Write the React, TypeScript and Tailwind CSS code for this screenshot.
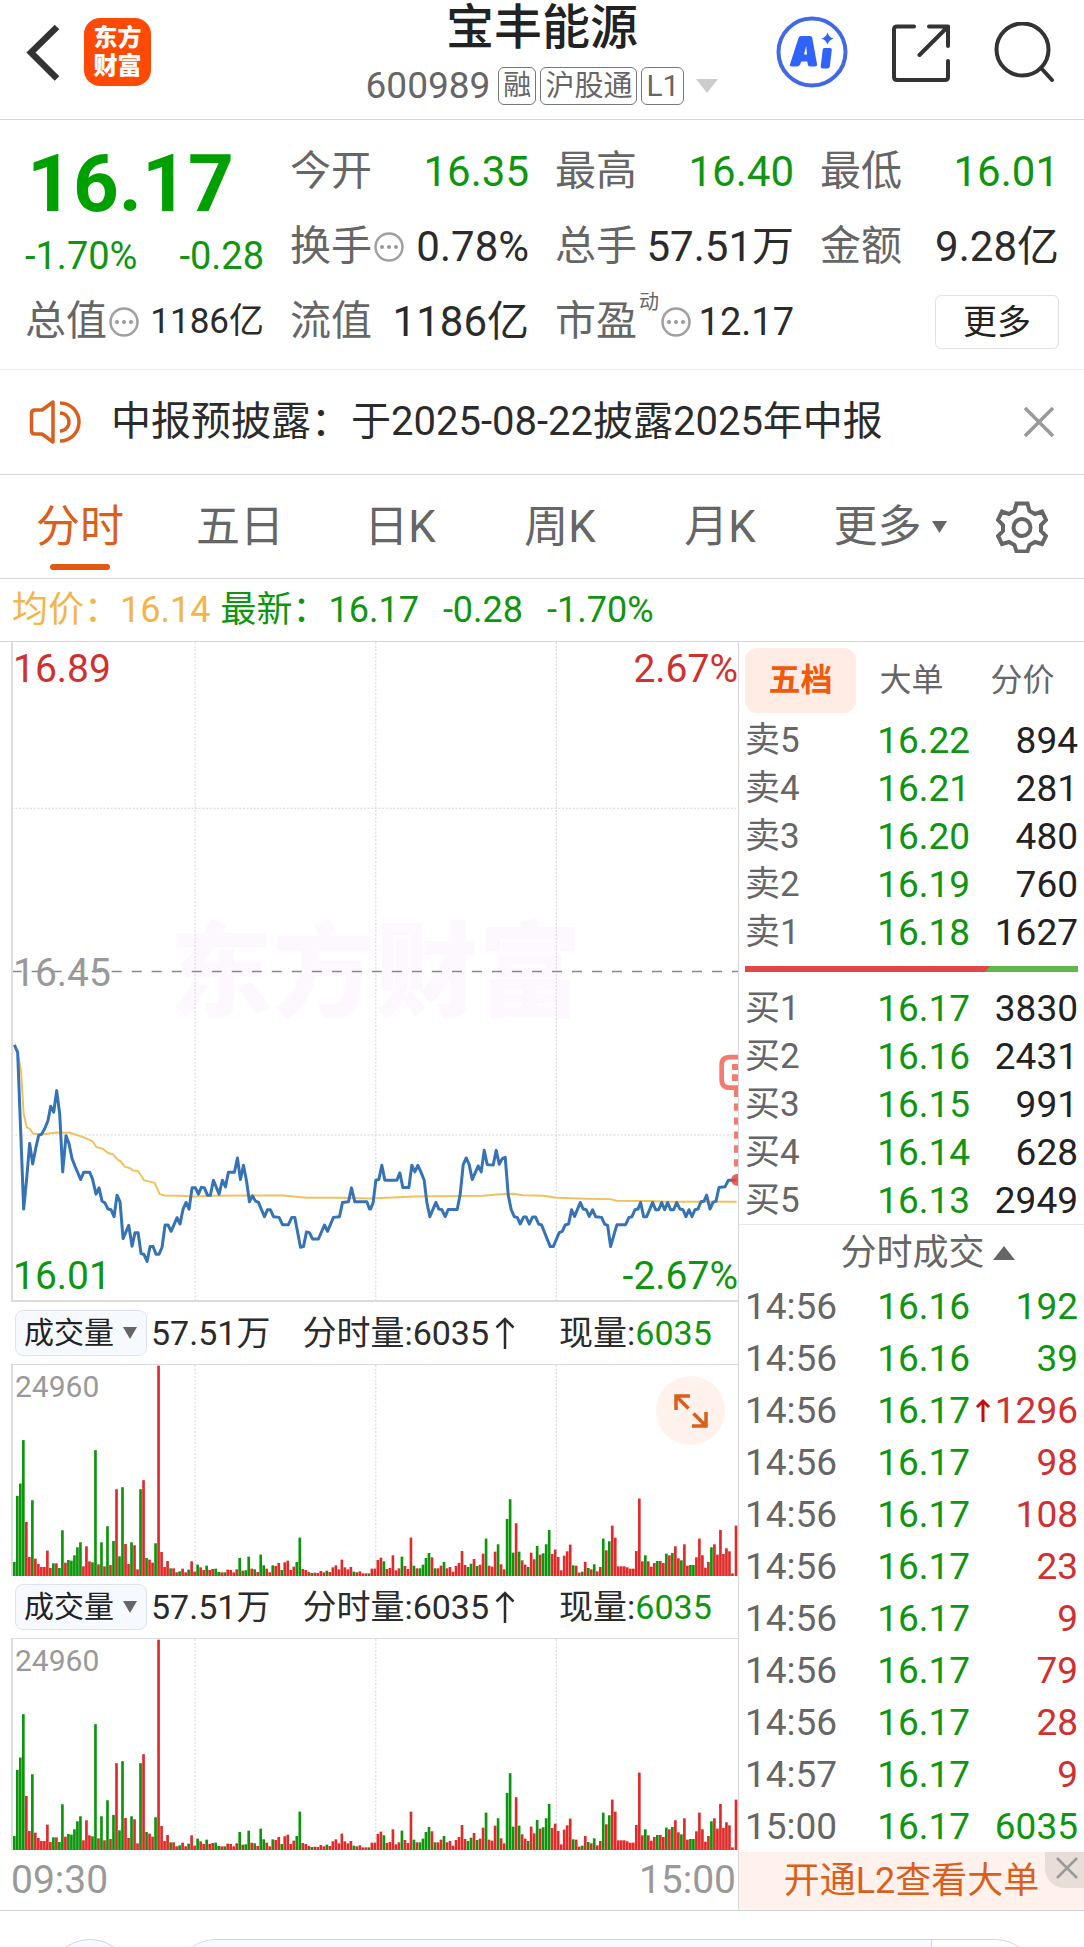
import React from 'react';

const PRICE_POINTS =
  '44,137 54,160 62,370 72,632 81,540 90,434 99,496 108,450 117,410 126,406 135,390 145,365 153,322 162,340 171,275 180,345 189,520 199,411 208,435 217,480 226,503 243,543 252,521 270,521 278,540 289,587 298,568 307,608 316,614 325,632 334,634 343,655 352,590 361,610 370,721 387,681 397,744 406,703 415,703 424,766 433,769 442,790 451,745 460,745 469,768 478,768 487,747 496,680 505,680 514,699 532,658 541,677 550,632 559,612 568,632 577,568 587,568 596,587 605,566 614,568 623,590 632,590 641,545 658,587 668,545 677,565 686,521 704,521 713,478 722,543 731,500 740,546 749,610 758,592 767,608 776,612 794,655 803,634 812,634 821,655 838,657 848,679 866,679 876,657 885,657 902,747 911,745 920,701 929,703 938,722 956,722 974,680 983,699 1001,657 1019,655 1028,612 1046,610 1055,568 1065,610 1101,610 1109,632 1112,632 1120,612 1128,545 1137,543 1146,500 1155,545 1191,545 1200,523 1209,567 1227,567 1236,500 1245,520 1254,500 1263,520 1273,545 1281,612 1290,655 1308,612 1317,632 1326,634 1336,655 1345,633 1372,633 1381,587 1390,498 1399,478 1408,498 1417,543 1435,502 1444,520 1453,455 1462,498 1480,499 1489,455 1498,497 1507,480 1516,476 1525,590 1534,634 1543,655 1552,657 1561,677 1571,656 1579,656 1588,677 1598,656 1607,656 1616,677 1625,680 1651,745 1660,745 1678,703 1687,699 1696,680 1706,677 1715,634 1724,654 1741,612 1750,632 1759,634 1768,654 1778,634 1787,655 1805,657 1814,677 1823,681 1832,745 1842,710 1851,679 1877,679 1887,657 1896,655 1905,634 1914,632 1922,612 1931,655 1940,655 1958,612 1967,634 1976,634 1985,612 1994,634 2003,612 2012,634 2021,634 2030,612 2040,632 2049,634 2058,655 2067,634 2076,655 2085,634 2094,632 2103,610 2112,608 2120,590 2130,632 2139,612 2148,608 2157,567 2175,565 2185,545 2210,545';

const AVERAGE_POINTS =
  '54,160 64,215 72,345 81,385 90,390 100,404 126,407 170,401 210,402 250,415 278,427 290,445 310,451 325,463 340,467 355,484 362,487 375,504 390,508 400,516 415,517 433,545 465,553 480,587 495,591 540,592 580,594 640,592 740,591 850,591 920,598 1020,598 1110,600 1180,597 1240,594 1450,592 1500,587 1540,586 1570,590 1630,592 1670,598 1760,601 1830,602 1850,607 1940,608 2010,610 2210,610';

const VOLUMES =
  'g42 g240 g277 g407 r162 r57 g227 r52 r36 r27 r27 r76 r24 g38 r38 g24 g137 r40 g48 g46 g62 g86 g101 r29 r89 r44 g41 g377 r35 g101 r29 g149 r33 g105 r260 g59 g266 r96 r36 g101 r92 r20 g260 r287 g54 r49 r40 g98 r630 r72 r27 r45 g23 r23 r11 g14 r22 r11 g19 r44 r13 g34 r26 r18 g31 r18 r21 g22 g12 r11 g11 r19 r18 r11 r20 g54 r16 g17 g58 r22 g20 r12 g64 g32 r22 r11 g32 r30 r39 g18 r41 r46 r18 r28 g42 g115 r21 r18 r12 g9 r10 r9 r15 r11 g16 r12 r26 r32 r20 r49 r26 r20 r27 g13 r11 r14 r8 r8 g8 r22 r22 r48 r55 g44 r21 r24 r62 r17 r23 g58 r30 r21 r115 g31 r23 g23 g34 g54 g69 r56 g23 r23 r31 g42 r23 r27 r13 r30 r39 r75 r33 g27 g37 r51 g30 r34 r67 g112 r31 r28 r73 g95 r35 r20 g171 g230 g70 r158 g73 r47 r34 g27 r70 r50 g90 r64 g68 g95 g138 r66 r79 r57 r17 r61 r74 r94 g32 r31 r10 g13 r42 g24 r20 g35 r14 r27 g112 r77 g104 r151 r115 r29 r29 r29 r26 r22 r22 r75 r232 r44 g62 r44 r28 r39 g45 r45 r39 g67 r62 g69 r89 r53 g47 r95 r31 g33 g33 r56 r112 r62 r25 r42 g86 r95 r64 r138 r66 r83 r74 r8 r151'
    .split(' ')
    .map((v) => ({ up: v[0] === 'r', value: Number(v.slice(1)) }));

const SELLS = [
  ['卖5', '16.22', '894'],
  ['卖4', '16.21', '281'],
  ['卖3', '16.20', '480'],
  ['卖2', '16.19', '760'],
  ['卖1', '16.18', '1627'],
];
const BUYS = [
  ['买1', '16.17', '3830'],
  ['买2', '16.16', '2431'],
  ['买3', '16.15', '991'],
  ['买4', '16.14', '628'],
  ['买5', '16.13', '2949'],
];
const TRADES = [
  { time: '14:56', price: '16.16', volume: '192', up: false },
  { time: '14:56', price: '16.16', volume: '39', up: false },
  { time: '14:56', price: '16.17', volume: '1296', up: true, arrow: true },
  { time: '14:56', price: '16.17', volume: '98', up: true },
  { time: '14:56', price: '16.17', volume: '108', up: true },
  { time: '14:56', price: '16.17', volume: '23', up: true },
  { time: '14:56', price: '16.17', volume: '9', up: true },
  { time: '14:56', price: '16.17', volume: '79', up: true },
  { time: '14:56', price: '16.17', volume: '28', up: true },
  { time: '14:57', price: '16.17', volume: '9', up: true },
  { time: '15:00', price: '16.17', volume: '6035', up: false },
];

function MoreDots() {
  return (
    <svg viewBox="0 0 30 30" className="size-[30px] shrink-0" aria-hidden="true">
      <circle cx="15" cy="15" r="13.5" fill="none" stroke="#a0a0a0" strokeWidth="2.5" />
      <circle cx="8" cy="15" r="2" fill="#999" />
      <circle cx="15" cy="15" r="2" fill="#999" />
      <circle cx="22" cy="15" r="2" fill="#999" />
    </svg>
  );
}

function Header() {
  return (
    <header className="grid h-[120px] shrink-0 grid-cols-[1fr_auto_1fr] border-b border-[#d6d6d6]">
      <div className="flex items-start gap-5 pl-6 pt-4">
        <button aria-label="返回" className="mt-2">
          <svg viewBox="0 0 40 58" className="h-[58px] w-10" fill="none" stroke="#333" strokeWidth="6.5">
            <path d="M33 3 7 28.500l26 26" strokeLinejoin="miter" />
          </svg>
        </button>
        <div className="mt-0.5 flex h-[68px] w-[67px] flex-col items-center justify-center rounded-2xl bg-[#ff4a05] text-2xl leading-7 font-black text-white">
          <span>东方</span>
          <span>财富</span>
        </div>
      </div>
      <div className="flex flex-col items-center">
        <h1 className="pt-0.5 text-5xl leading-[52px] font-medium text-[#222]">宝丰能源</h1>
        <button className="mt-3 flex items-center gap-1 text-[#666]">
          <span className="text-[37px] leading-10">600989</span>
          <span className="ml-1 rounded-md border border-[#777] px-1 text-[28px] leading-9">融</span>
          <span className="rounded-md border border-[#777] px-1 text-[29px] leading-9">沪股通</span>
          <span className="rounded-md border border-[#777] px-1 text-[30px] leading-9">L1</span>
          <svg viewBox="0 0 22 14" className="ml-2 h-3.5 w-[22px]" aria-hidden="true">
            <path d="M0 0h22L11 14z" fill="#ccc" />
          </svg>
        </button>
      </div>
      <div className="flex items-start justify-end gap-11 pt-4 pr-[30px]">
        <button aria-label="AI">
          <svg viewBox="0 0 72 72" className="size-[72px]">
            <circle cx="36" cy="36" r="33.500" fill="none" stroke="#4169e6" strokeWidth="4" />
            <g fill="#2f63fa">
              <path
                fillRule="evenodd"
                d="M25 20h9q2 0 2.300 2L41 48q.3 2.500-2 2.500h-5q-2 0-2.200-2l-.5-3h-6l-1.200 3q-.8 2-3 2h-5.500q-2.500 0-1.500-2.500L22.500 22q.7-2 2.500-2ZM28 38.500h3L30.200 30Z"
              />
              <path d="M48 32h6q2 0 1.800 2l-2 16.500q-.3 2-2.300 2h-5q-2 0-1.800-2l2-16.500q.3-2 1.300-2Z" />
              <path d="M51.500 16.500q1.500 5 6 6-4.500 1.500-6 6-1.500-4.500-6-6 4.500-1 6-6Z" />
            </g>
          </svg>
        </button>
        <button aria-label="分享" className="mt-2">
          <svg viewBox="0 0 58 58" className="size-[58px]" fill="none" stroke="#333" strokeWidth="4" strokeLinecap="round" strokeLinejoin="round">
            <path d="M22 2.500H5q-3 0-3 3V53q0 3 3 3h48q3 0 3-3V37M37 2.500h19V22M56 2.500 27.500 31" />
          </svg>
        </button>
        <button aria-label="搜索" className="mt-1.5">
          <svg viewBox="0 0 60 60" className="size-[60px]" fill="none" stroke="#333" strokeWidth="4" strokeLinecap="round">
            <circle cx="28.500" cy="27.500" r="26" />
            <path d="m47 46 11 12" />
          </svg>
        </button>
      </div>
    </header>
  );
}

function Stat({
  label,
  value,
  tone = 'text-[#2b2b2b]',
  size = 'text-[42px]',
  dots = false,
  sup,
}: {
  label: string;
  value: string;
  tone?: string;
  size?: string;
  dots?: boolean;
  sup?: string;
}) {
  return (
    <div className="flex h-[75px] items-center justify-between whitespace-nowrap">
      <dt className="flex items-center gap-0.5 text-[41px] leading-none text-[#666]">
        <span>{label}</span>
        {sup && <sup className="-top-5 self-center text-xl leading-none">{sup}</sup>}
        {dots && <MoreDots />}
      </dt>
      <dd className={`leading-none ${size} ${tone}`}>{value}</dd>
    </div>
  );
}

function Quote() {
  return (
    <section className="shrink-0 border-b border-[#ececec] px-[25px] pt-3.5 pb-2.5">
      <div className="grid grid-cols-4 gap-x-[26px]">
        <div className="row-span-2 pt-3">
          <p className="pl-0.5 text-[80px] leading-[76px] font-bold text-[#00a000]">16.17</p>
          <p className="mt-4 flex justify-between text-[38px] leading-9 whitespace-nowrap text-[#109510]">
            <span>-1.70%</span>
            <span>-0.28</span>
          </p>
        </div>
        <dl className="contents">
          <Stat label="今开" value="16.35" tone="text-[#109510]" />
          <Stat label="最高" value="16.40" tone="text-[#109510]" />
          <Stat label="最低" value="16.01" tone="text-[#109510]" />
          <Stat label="换手" value="0.78%" dots />
          <Stat label="总手" value="57.51万" />
          <Stat label="金额" value="9.28亿" />
          <Stat label="总值" value="1186亿" dots size="text-[35px]" />
          <Stat label="流值" value="1186亿" />
          <Stat label="市盈" value="12.17" sup="动" dots size="text-[38px]" />
        </dl>
        <div className="flex h-[75px] items-center justify-end">
          <button className="h-[54px] w-[124px] rounded-md border border-[#e2e2e2] text-[34px] leading-none text-[#222]">更多</button>
        </div>
      </div>
    </section>
  );
}

function Notice() {
  return (
    <section className="flex h-[105px] shrink-0 items-center border-b border-[#d6d6d6] pr-[30px] pl-[29px]">
      <svg viewBox="0 0 52 46" className="h-[46px] w-[52px] shrink-0" fill="none" stroke="#d9601c" strokeWidth="3.500" aria-hidden="true">
        <path d="M24 3v40L13 35H6q-3.500 0-3.500-3.500v-17Q2.500 11 6 11h7Z" strokeLinejoin="round" />
        <path d="M31 14a9 9 0 0 1 0 18M31 4a19 19 0 0 1 0 38" />
      </svg>
      <p className="ml-[30px] flex-1 text-[40px] leading-none whitespace-nowrap text-[#2b2b2b]">中报预披露：于2025-08-22披露2025年中报</p>
      <button aria-label="关闭">
        <svg viewBox="0 0 30 30" className="size-[30px]" stroke="#999" strokeWidth="3.500">
          <path d="m1 1 28 28M29 1 1 29" />
        </svg>
      </button>
    </section>
  );
}

function Periods() {
  return (
    <nav className="grid h-[104px] shrink-0 grid-cols-[repeat(5,16fr)_18fr_10fr] border-b border-[#d6d6d6] pr-1 text-[44px] leading-none text-[#666]">
      <button className="relative text-[#d9601c]">
        分时
        <span className="absolute bottom-2 left-1/2 h-1.5 w-[60px] -translate-x-1/2 rounded-full bg-[#e0590e]" />
      </button>
      <button>五日</button>
      <button>日K</button>
      <button>周K</button>
      <button>月K</button>
      <button className="flex items-center justify-center gap-2.5">
        更多
        <svg viewBox="0 0 15 12" className="h-3 w-[15px]" aria-hidden="true">
          <path d="M0 0h15L7.500 12z" fill="#666" />
        </svg>
      </button>
      <button aria-label="设置" className="flex items-center pl-4">
        <svg viewBox="0 0 52 52" className="size-[52px]" fill="none" stroke="#666" strokeWidth="4" strokeLinejoin="miter">
          <path d="M20.500 2.500h11l2 7.500 5.500 3 7-2.500 4 8.500-5 5v6l5 5-4 8-7-2-5.500 3-2 6.500h-11l-2-6.500-5.500-3-7 2-4-8 5-5v-6l-5-5 4-8.500 7 2.500 5.500-3Z" />
          <circle cx="26" cy="26.500" r="8.500" />
        </svg>
      </button>
    </nav>
  );
}

function Summary() {
  return (
    <p className="flex h-[63px] shrink-0 items-center border-b border-[#d6d6d6] pl-3 text-[36px] leading-none whitespace-nowrap text-[#109510]">
      <span className="text-[#f2b54a]">均价：16.14</span>
      <span className="ml-2.5">最新：16.17</span>
      <span className="ml-6">-0.28</span>
      <span className="ml-6">-1.70%</span>
    </p>
  );
}

function GridLines({ top, height }: { top: number; height: number }) {
  return (
    <g stroke="#d4d4d4" strokeWidth="3" strokeDasharray="6 5">
      {[586, 1128, 1669].map((x) => (
        <path key={x} d={`M${x} ${top}v${height}`} />
      ))}
    </g>
  );
}

function PriceChart() {
  return (
    <div className="relative h-[660px] overflow-hidden border-b-2 border-l-2 border-[#dcdcdc] text-[39px] leading-none">
      <div className="absolute inset-x-0 top-[272px] text-center text-[103px] leading-[120px] font-black text-[#fdf8fe]">东方财富</div>
      <svg viewBox="40 -1077 2174 1983" preserveAspectRatio="none" className="absolute inset-0 size-full" role="img" aria-label="分时走势">
        <GridLines top={-1077} height={1983} />
        <path d="M36-576h2178M36 409h2178" stroke="#d4d4d4" strokeWidth="3" strokeDasharray="6 5" />
        <path d="M36-84h2178" stroke="#888" strokeWidth="4" strokeDasharray="30 30" />
        <polyline points={AVERAGE_POINTS} fill="none" stroke="#f0c25e" strokeWidth="6" strokeLinejoin="round" />
        <polyline points={PRICE_POINTS} fill="none" stroke="#3673b5" strokeWidth="9" strokeLinejoin="round" />
        <g fill="none" stroke="#f47c6e">
          <path d="M2214 174h-24q-25 0-25 24v44q0 24 25 24h24" strokeWidth="14" />
          <path d="M2208 272v250" strokeWidth="12" strokeDasharray="22 20" />
        </g>
        <path d="M2196 195h18v18h-18zM2196 226h18v20h-18z" fill="#f47c6e" />
        <circle cx="2211" cy="544" r="18" fill="#e8463c" fillOpacity=".85" />
      </svg>
      <span className="absolute top-2 left-0 text-[#d03030]">16.89</span>
      <span className="absolute top-2 right-0 text-[#d03030]">2.67%</span>
      <span className="absolute top-[312px] left-0 text-[#999]">16.45</span>
      <span className="absolute bottom-1 left-0 text-[#109510]">16.01</span>
      <span className="absolute right-0 bottom-1 text-[#109510]">-2.67%</span>
    </div>
  );
}

function VolumePanel({ id, expandable = false }: { id: string; expandable?: boolean }) {
  return (
    <section>
      <div className="flex h-[62px] items-center pl-1 text-[34px] leading-none whitespace-nowrap text-[#2b2b2b]">
        <div className="relative h-[46px] w-[132px] shrink-0">
          <select
            id={id}
            aria-label="指标"
            className="size-full appearance-none rounded-lg border border-[#dfe3ee] bg-[#f6f9ff] pl-2 text-[30px] leading-10 text-[#222]"
          >
            <option>成交量</option>
          </select>
          <svg viewBox="0 0 14 12" className="pointer-events-none absolute top-[17px] right-2.5 h-3 w-3.5" aria-hidden="true">
            <path d="M0 0h14L7 12z" fill="#666" />
          </svg>
        </div>
        <span className="ml-1">57.51万</span>
        <span className="ml-8">分时量:6035</span>
        <svg viewBox="0 0 20 32" className="ml-1.5 h-8 w-5" fill="none" stroke="#2b2b2b" strokeWidth="2.500" aria-hidden="true">
          <path d="M10 32V2M1.500 10.500 10 2l8.500 8.500" />
        </svg>
        <span className="ml-11">
          现量:<span className="text-[#109510]">6035</span>
        </span>
      </div>
      <div className="relative h-[212px] border-t border-l-2 border-[#dcdcdc]">
        <svg viewBox="40 193 2174 632" preserveAspectRatio="none" className="absolute inset-0 size-full" role="img" aria-label="成交量柱状图">
          <GridLines top={193} height={632} />
          {VOLUMES.map((v, i) => (
            <rect
              key={i}
              x={i === 240 ? 2204 : 40 + i * 9.01}
              y={825 - v.value}
              width="8"
              height={v.value}
              fill={v.up ? '#e02b2b' : '#0c960c'}
            />
          ))}
        </svg>
        <span className="absolute top-[7px] left-0.5 text-[30px] leading-none text-[#999]">24960</span>
        {expandable && (
          <button aria-label="全屏" className="absolute top-[11px] right-[13px] flex size-[69px] items-center justify-center rounded-full bg-[#fff1ec]">
            <svg viewBox="0 0 34 34" className="size-[34px]" fill="none" stroke="#d9601c" strokeWidth="3.500">
              <path d="M2 16V2h14M2.500 2.500 14.500 14.500M32 18V32H18M31.500 31.500 19.500 19.500" />
            </svg>
          </button>
        )}
      </div>
    </section>
  );
}

function Depth({ rows }: { rows: string[][] }) {
  return (
    <table className="w-full table-fixed text-[37px] leading-none">
      <tbody>
        {rows.map(([level, price, volume]) => (
          <tr key={level} className="h-12">
            <th scope="row" className="w-[30%] pl-1.5 text-left text-[35px] font-normal text-[#666]">
              {level}
            </th>
            <td className="w-[37%] text-right text-[#109510]">{price}</td>
            <td className="pr-1.5 text-right text-[#222]">{volume}</td>
          </tr>
        ))}
      </tbody>
    </table>
  );
}

function OrderBook() {
  return (
    <aside className="flex flex-col border-l border-[#d6d6dc]">
      <div className="flex h-[74px] shrink-0 items-center pt-0.5 pr-1.5 pl-1.5 text-[32px] leading-none text-[#666]">
        <button className="h-[65px] w-[111px] rounded-xl bg-[#ffece4] font-bold text-[#f05a0a]">五档</button>
        <button className="flex-1">大单</button>
        <button className="flex-1">分价</button>
      </div>
      <Depth rows={SELLS} />
      <svg viewBox="0 0 333 6" preserveAspectRatio="none" className="mx-1.5 mt-2.5 mb-3 h-1.5 shrink-0" aria-hidden="true">
        <path d="M0 0h333v6H0z" fill="#5fb74a" />
        <path d="M0 0h245l-5 6H0z" fill="#e04848" />
      </svg>
      <Depth rows={BUYS} />
      <button className="flex h-14 shrink-0 items-center justify-center gap-2 border-t border-[#e6e6ea] pl-8 text-[36px] leading-none text-[#666]">
        分时成交
        <svg viewBox="0 0 22 14" className="h-3.5 w-[22px]" aria-hidden="true">
          <path d="M0 14h22L11 0z" fill="#666" />
        </svg>
      </button>
      <table className="w-full table-fixed text-[37px] leading-none">
        <tbody>
          {TRADES.map((t, i) => (
            <tr key={i} className="h-[52px]">
              <td className="w-[30%] pl-1.5 text-[#666]">{t.time}</td>
              <td className="w-[37%] text-right text-[#109510]">{t.price}</td>
              <td className={t.up ? 'pr-1.5 text-[#d03030]' : 'pr-1.5 text-[#109510]'}>
                <span className="flex items-center justify-end gap-1">
                  {t.arrow && (
                    <svg viewBox="0 0 16 24" className="h-6 w-4" fill="none" stroke="#c40d0d" strokeWidth="3" aria-label="上升">
                      <path d="M8 24V3M2 9l6-6 6 6" />
                    </svg>
                  )}
                  {t.volume}
                </span>
              </td>
            </tr>
          ))}
        </tbody>
      </table>
      <div className="relative flex flex-1 bg-[#fff1ec]">
        <a href="#l2" className="flex flex-1 items-center justify-center text-[36px] leading-none text-[#d9601c]">
          开通L2查看大单
        </a>
        <button aria-label="关闭广告" className="absolute top-0 right-0 flex h-9 w-[39px] items-center justify-center rounded-bl-[20px] bg-[#e9ddd8] pb-1 pl-1">
          <svg viewBox="0 0 22 22" className="size-[22px]" stroke="#999" strokeWidth="2.500">
            <path d="m1 1 20 20M21 1 1 21" />
          </svg>
        </button>
      </div>
    </aside>
  );
}

function BottomBar() {
  return (
    <footer className="flex shrink-0 gap-10 pt-7 pr-[46px] pb-6 pl-[47px]">
      <button aria-label="消息" className="size-[86px] shrink-0 rounded-full border border-[#d3d6de] bg-[#f6f9ff]" />
      <div className="flex h-[86px] flex-1 overflow-hidden rounded-full border border-[#d3d6de]">
        <input aria-label="评论" className="min-w-0 flex-1 border-r border-[#d3d6de] bg-[#f6f9ff] px-10 text-4xl" />
        <button aria-label="发送" className="w-[105px]" />
      </div>
    </footer>
  );
}

export default function App() {
  return (
    <div className="flex h-screen flex-col overflow-hidden bg-white font-['Roboto','Noto_Sans_CJK_SC',sans-serif]">
      <Header />
      <Quote />
      <Notice />
      <Periods />
      <Summary />
      <main className="grid shrink-0 grid-cols-[738fr_346fr] border-b border-[#d6d6d6]">
        <div className="pl-[11px]">
          <PriceChart />
          <VolumePanel id="indicator-1" expandable />
          <VolumePanel id="indicator-2" />
          <div className="flex h-[60px] items-center justify-between pr-0.5 text-[39px] leading-none text-[#999]">
            <span>09:30</span>
            <span>15:00</span>
          </div>
        </div>
        <OrderBook />
      </main>
      <BottomBar />
    </div>
  );
}
